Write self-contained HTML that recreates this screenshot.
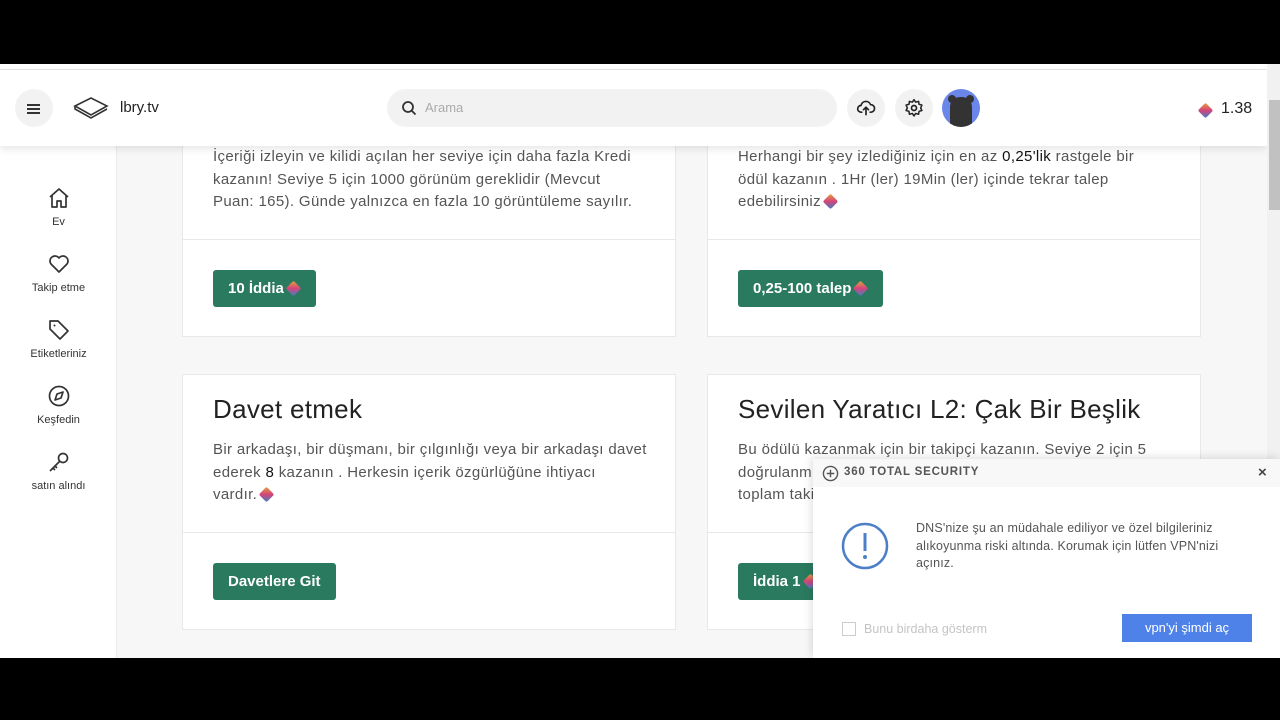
<!DOCTYPE html>
<html><head><meta charset="utf-8"><style>
*{box-sizing:border-box;margin:0;padding:0}
body{width:1280px;height:720px;background:#000;font-family:"Liberation Sans",sans-serif;position:relative;overflow:hidden;color:#212121}
#page{position:absolute;left:0;top:64px;width:1267px;height:594px;background:#f7f7f7;overflow:hidden}
#scroll{position:absolute;left:1267px;top:64px;width:13px;height:594px;background:#f1f1f1}
#thumb{position:absolute;left:2px;top:36px;width:11px;height:110px;background:#c1c1c1}
#top{position:absolute;left:0;top:0;width:1267px;height:6px;background:#fff;border-bottom:1px solid #e6e6e6}
#header{position:absolute;left:0;top:6px;width:1267px;height:76px;background:#fff;box-shadow:0 3px 8px rgba(0,0,0,.1);z-index:5}
.circ{position:absolute;width:38px;height:38px;border-radius:50%;background:#f2f2f2}
#side{position:absolute;left:0;top:82px;width:117px;height:512px;background:#fff;border-right:1px solid #ececec}
.nav{position:absolute;left:0;width:117px;text-align:center;font-size:11px;color:#333}
.nav svg{display:block;margin:0 auto 6px}
.card{position:absolute;background:#fff;border:1px solid #e8e8e8}
.txt{position:absolute;font-size:15px;line-height:22.5px;color:#555;letter-spacing:0.35px}
.txt b{color:#111;font-weight:normal}
.sep{position:absolute;left:0;right:0;height:1px;background:#e8e8e8}
.btn{position:absolute;height:37px;background:#2a7a60;color:#fff;font-weight:bold;font-size:15px;line-height:37px;padding:0 15px;border-radius:3px}
h2{position:absolute;font-weight:normal;font-size:26px;color:#222;letter-spacing:0.3px}
.lbc{display:inline-block;width:11px;height:11px;transform:rotate(45deg);background:linear-gradient(135deg,#e8a33a,#d3437b 50%,#3a83c5);vertical-align:-1px;margin-left:4px;margin-right:2px;border-radius:2px}
#pop{position:absolute;left:813px;top:459px;width:467px;height:199px;background:#fff;box-shadow:-2px -2px 8px rgba(0,0,0,.12);z-index:10}
</style></head><body>
<div id="page">
<div id="top"></div>
<div id="header">
 <div class="circ" style="left:15px;top:19px"></div>
 <div style="position:absolute;left:27px;top:34px;width:13px;height:2px;background:#333;box-shadow:0 4px 0 #333,0 8px 0 #333"></div>
 <svg style="position:absolute;left:73px;top:26px" width="36" height="24" viewBox="0 0 36 24"><path d="M2 10 L18 2 L34 10 L18 19 Z M2 10 L2 13 L18 22 L34 13" fill="none" stroke="#333" stroke-width="1.6"/></svg>
 <div style="position:absolute;left:120px;top:29px;font-size:15px;color:#222">lbry.tv</div>
 <div style="position:absolute;left:387px;top:19px;width:450px;height:38px;border-radius:19px;background:#f2f2f2"></div>
 <svg style="position:absolute;left:401px;top:30px" width="16" height="16" viewBox="0 0 16 16"><circle cx="7" cy="7" r="5" fill="none" stroke="#333" stroke-width="1.8"/><path d="M11 11 L14.5 14.5" stroke="#333" stroke-width="1.8"/></svg>
 <div style="position:absolute;left:425px;top:30px;font-size:13px;color:#aaa">Arama</div>
 <div class="circ" style="left:847px;top:19px"></div>
 <svg style="position:absolute;left:856px;top:28px" width="20" height="20" viewBox="0 0 24 24"><path d="M7 17 H6 a4 4 0 0 1 0-8 a6 6 0 0 1 11.5-1 A4.5 4.5 0 0 1 18 17 h-1 M12 20 V11 M9 14 l3-3 3 3" fill="none" stroke="#222" stroke-width="2" stroke-linecap="round" stroke-linejoin="round"/></svg>
 <div class="circ" style="left:895px;top:19px"></div>
 <svg style="position:absolute;left:904px;top:28px" width="20" height="20" viewBox="0 0 24 24"><circle cx="12" cy="12" r="3" fill="none" stroke="#222" stroke-width="2"/><path d="M12 2 l2 3 3.5-1 .5 3.5 3.5 1-1.5 3.5 1.5 3-3.5 1-.5 3.5-3.5-1-2 3-2-3-3.5 1-.5-3.5-3.5-1 1.5-3-1.5-3.5 3.5-1 .5-3.5 3.5 1z" fill="none" stroke="#222" stroke-width="1.8" stroke-linejoin="round"/></svg>
 <div style="position:absolute;left:942px;top:19px;width:38px;height:38px;border-radius:50%;background:#6a86e8;overflow:hidden"><div style="position:absolute;left:8px;top:8px;width:22px;height:32px;border-radius:10px 10px 4px 4px;background:#333"></div><div style="position:absolute;left:6px;top:6px;width:8px;height:8px;border-radius:50%;background:#333"></div><div style="position:absolute;left:24px;top:6px;width:8px;height:8px;border-radius:50%;background:#333"></div></div>
 <div style="position:absolute;left:1196px;top:32px"><span class="lbc"></span></div>
 <div style="position:absolute;left:1221px;top:30px;font-size:16px;color:#222">1.38</div>
</div>
<div id="side">
 <div class="nav" style="top:40px"><svg width="24" height="24" viewBox="0 0 24 24"><path d="M3 11 L12 3 L21 11 M5 9 V21 H10 V15 H14 V21 H19 V9" fill="none" stroke="#333" stroke-width="1.7" stroke-linejoin="round"/></svg>Ev</div>
 <div class="nav" style="top:106px"><svg width="24" height="24" viewBox="0 0 24 24"><path d="M12 20 L4 12 a4.5 4.5 0 0 1 8-6 a4.5 4.5 0 0 1 8 6 Z" fill="none" stroke="#333" stroke-width="1.7" stroke-linejoin="round"/></svg>Takip etme</div>
 <div class="nav" style="top:172px"><svg width="24" height="24" viewBox="0 0 24 24"><path d="M3 3 H11 L21 13 L13 21 L3 11 Z" fill="none" stroke="#333" stroke-width="1.7" stroke-linejoin="round"/><circle cx="7.5" cy="7.5" r="1" fill="#333"/></svg>Etiketleriniz</div>
 <div class="nav" style="top:238px"><svg width="24" height="24" viewBox="0 0 24 24"><circle cx="12" cy="12" r="9.5" fill="none" stroke="#333" stroke-width="1.7"/><path d="M16 8 L14 14 L8 16 L10 10 Z" fill="none" stroke="#333" stroke-width="1.7" stroke-linejoin="round"/></svg>Keşfedin</div>
 <div class="nav" style="top:304px"><svg width="24" height="24" viewBox="0 0 24 24"><circle cx="16" cy="8" r="4.5" fill="none" stroke="#333" stroke-width="1.7"/><path d="M13 11 L3 21 M6 18 L8 20 M8 16 L10 18" fill="none" stroke="#333" stroke-width="1.7"/></svg>satın alındı</div>
</div>
<div class="card" style="left:182px;top:10px;width:494px;height:263px">
 <div class="txt" style="left:30px;top:71px;width:420px">İçeriği izleyin ve kilidi açılan her seviye için daha fazla Kredi kazanın! Seviye 5 için 1000 görünüm gereklidir (Mevcut Puan: 165). Günde yalnızca en fazla 10 görüntüleme sayılır.</div>
 <div class="sep" style="top:164px"></div>
 <div class="btn" style="left:30px;top:195px">10 İddia<span class="lbc"></span></div>
</div>
<div class="card" style="left:707px;top:10px;width:494px;height:263px">
 <div class="txt" style="left:30px;top:71px;width:420px">Herhangi bir şey izlediğiniz için en az <b>0,25'lik</b> rastgele bir ödül kazanın . 1Hr (ler) 19Min (ler) içinde tekrar talep edebilirsiniz<span class="lbc"></span></div>
 <div class="sep" style="top:164px"></div>
 <div class="btn" style="left:30px;top:195px">0,25-100 talep<span class="lbc"></span></div>
</div>
<div class="card" style="left:182px;top:310px;width:494px;height:256px">
 <h2 style="left:30px;top:19px">Davet etmek</h2>
 <div class="txt" style="left:30px;top:64px;width:440px">Bir arkadaşı, bir düşmanı, bir çılgınlığı veya bir arkadaşı davet<br>ederek <b>8</b> kazanın . Herkesin içerik özgürlüğüne ihtiyacı<br>vardır.<span class="lbc"></span></div>
 <div class="sep" style="top:157px"></div>
 <div class="btn" style="left:30px;top:188px">Davetlere Git</div>
</div>
<div class="card" style="left:707px;top:310px;width:494px;height:256px">
 <h2 style="left:30px;top:19px">Sevilen Yaratıcı L2: Çak Bir Beşlik</h2>
 <div class="txt" style="left:30px;top:64px;width:440px">Bu ödülü kazanmak için bir takipçi kazanın. Seviye 2 için 5<br>doğrulanmış takipçi gereklidir (Mevcut Puan: 0).<br>toplam takipçi sayısı</div>
 <div class="sep" style="top:157px"></div>
 <div class="btn" style="left:30px;top:188px">İddia 1<span class="lbc"></span></div>
</div>
</div>
<div id="scroll"><div id="thumb"></div></div>
<div id="pop">
 <div style="position:absolute;left:0;top:0;width:467px;height:28px;background:#f8f8f8"></div>
 <svg style="position:absolute;left:9px;top:6px" width="17" height="17" viewBox="0 0 18 18"><circle cx="9" cy="9" r="7.5" fill="none" stroke="#555" stroke-width="1.5"/><path d="M9 5 V13 M5 9 H13" stroke="#555" stroke-width="1.5"/></svg>
 <div style="position:absolute;left:31px;top:7px;font-size:11.5px;font-weight:bold;color:#555;letter-spacing:.8px">360 TOTAL SECURITY</div>
 <div style="position:absolute;left:445px;top:5px;font-size:15px;color:#444;font-weight:bold">×</div>
 <svg style="position:absolute;left:28px;top:63px" width="48" height="48" viewBox="0 0 48 48"><circle cx="24" cy="24" r="22" fill="none" stroke="#4d7fc8" stroke-width="2.5"/><path d="M24 11 V29" stroke="#4d7fc8" stroke-width="3"/><circle cx="24" cy="35" r="2" fill="#4d7fc8"/></svg>
 <div style="position:absolute;left:103px;top:61px;width:330px;font-size:12.5px;line-height:17.5px;color:#555;letter-spacing:0.15px">DNS'nize şu an müdahale ediliyor ve özel bilgileriniz alıkoyunma riski altında. Korumak için lütfen VPN'nizi açınız.</div>
 <div style="position:absolute;left:29px;top:163px;width:14px;height:14px;border:1px solid #ccc"></div>
 <div style="position:absolute;left:51px;top:163px;font-size:12.5px;color:#c4c4c4">Bunu birdaha gösterm</div>
 <div style="position:absolute;left:309px;top:155px;width:130px;height:28px;background:#4e82e9;color:#fff;font-size:13px;line-height:28px;text-align:center">vpn'yi şimdi aç</div>
</div>
</body></html>
